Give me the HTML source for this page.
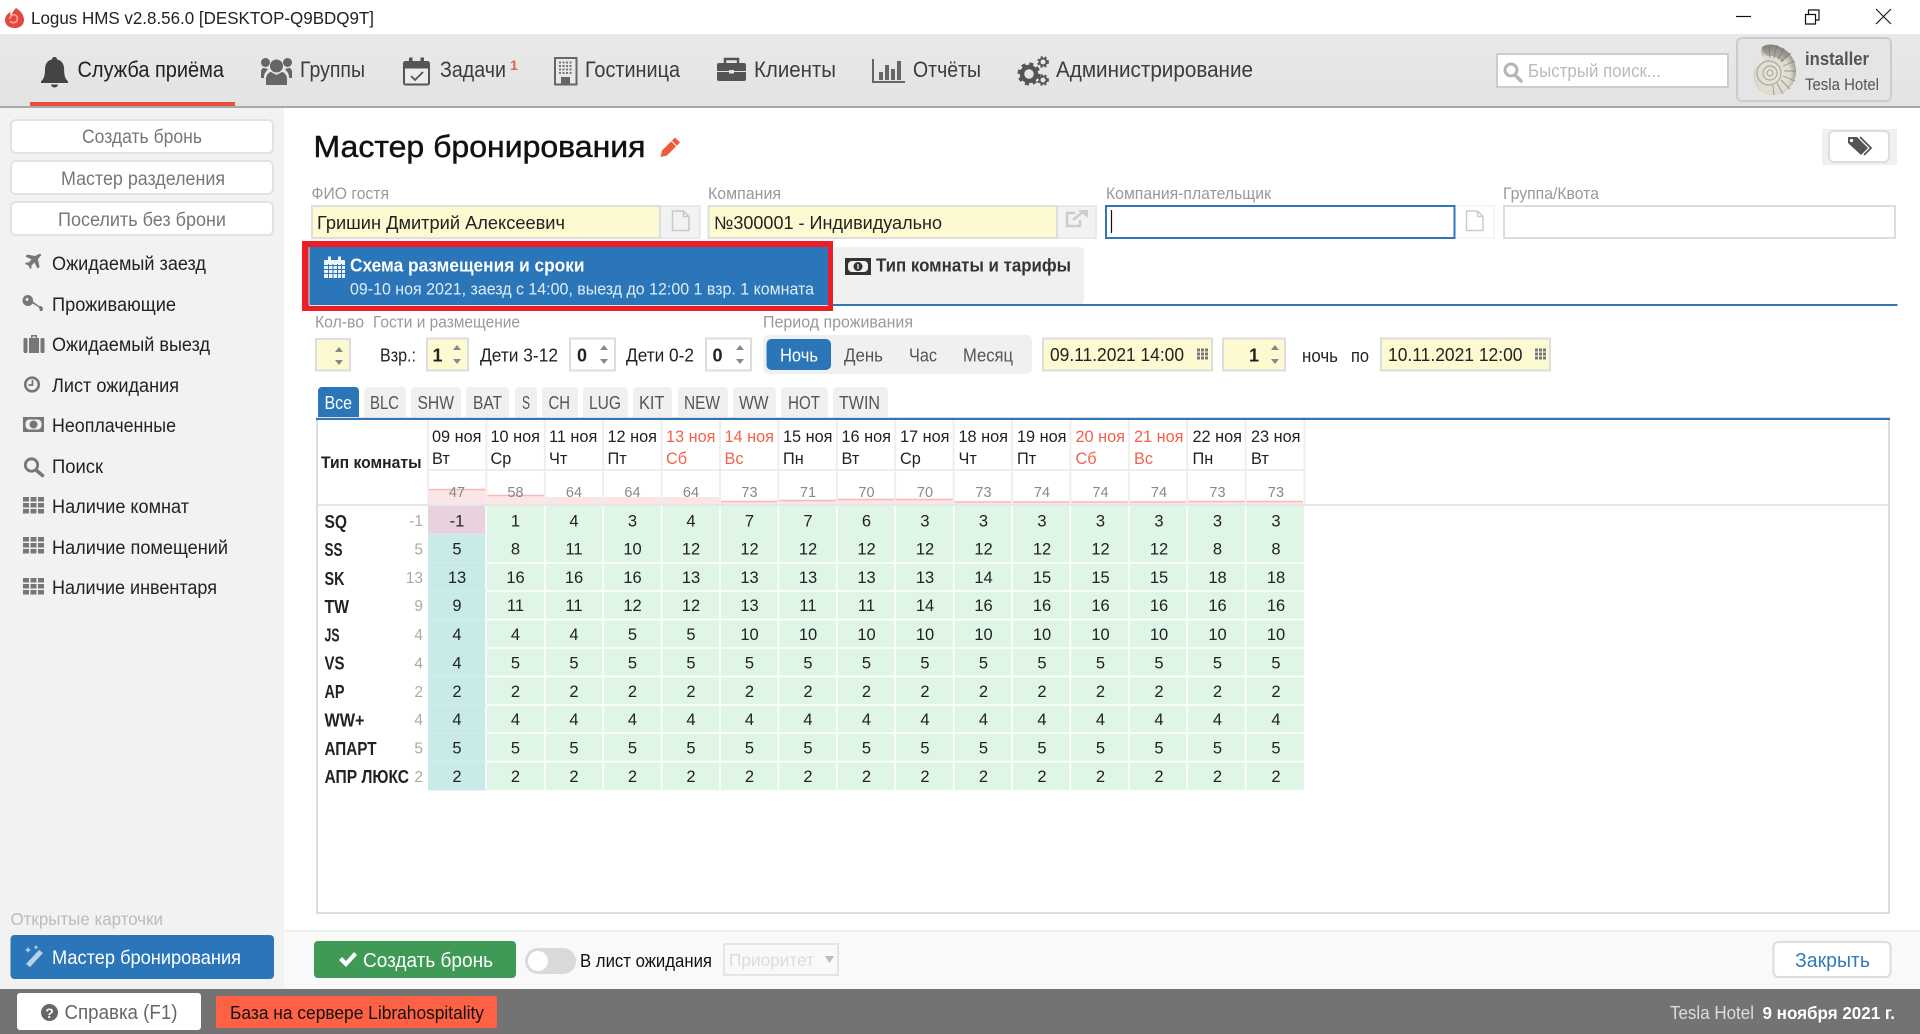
<!DOCTYPE html>
<html lang="ru">
<head>
<meta charset="utf-8">
<title>Logus HMS</title>
<style>
html,body{margin:0;padding:0;background:#fff;width:1920px;height:1034px;overflow:hidden}
svg{display:block;font-family:"Liberation Sans",sans-serif}
</style>
</head>
<body>
<svg xmlns="http://www.w3.org/2000/svg" width="1920" height="1034" viewBox="0 0 1920 1034">
<defs>
<linearGradient id="hd" x1="0" y1="0" x2="0" y2="1"><stop offset="0" stop-color="#e9e9e9"/><stop offset="1" stop-color="#e3e3e3"/></linearGradient>
<radialGradient id="sh" cx="0.45" cy="0.6" r="0.62"><stop offset="0" stop-color="#e8e6dc"/><stop offset="0.65" stop-color="#dedbcf"/><stop offset="1" stop-color="#8b8a80"/></radialGradient>
</defs>

<!-- title bar -->
<rect width="1920" height="34" fill="#fff"/>
<path d="M16 8c5 3 8 7 8 12 0 5-4 8-9 8-6 0-10-3-10-8 0-4 3-7 6-8-1 2-1 3 0 4 1-3 3-6 5-8z" fill="#e4473f"/>
<path d="M10 19c0-3 3-5 5-4 3 1 3 5 1 7-2 1-5 1-6-1" fill="none" stroke="#f7a79c" stroke-width="1.6"/>
<text x="31" y="24" font-size="17.500" fill="#222" textLength="343" lengthAdjust="spacingAndGlyphs">Logus HMS v2.8.56.0 [DESKTOP-Q9BDQ9T]</text>
<path d="M1736 16.500h15" stroke="#111" stroke-width="1.200"/>
<path d="M1805.500 14.500h10v9.500h-10zM1808.500 14.500v-4.500h10.500v10h-3.500" fill="none" stroke="#111" stroke-width="1.200"/>
<path d="M1876 9l15 15M1891 9l-15 15" stroke="#111" stroke-width="1.100"/>

<!-- header -->
<rect y="34" width="1920" height="72" fill="url(#hd)"/>
<rect y="106" width="1920" height="2" fill="#a9a9a9"/>
<rect x="30" y="102" width="205" height="4" fill="#e74c3c"/>

<path d="M54.500 57c1.600 0 2.600 1 2.600 2.500 5 1 7 5 7 10 0 6 1 9 4 12v1.500H41v-1.500c3-3 4-6 4-12 0-5 2-9 7-10 0-1.500 1-2.500 2.500-2.500z" fill="#444"/>
<path d="M51 84.500h7a3.500 3 0 0 1-7 0z" fill="#444"/>
<text x="77.500" y="77" font-size="22.500" fill="#222" textLength="146.500" lengthAdjust="spacingAndGlyphs">Служба приёма</text>

<g fill="#666"><circle cx="276.500" cy="66" r="6.500"/><path d="M266 85v-6c0-4 3-7 5-7l5.500 3 5.500-3c2 0 5 3 5 7v6z"/><circle cx="265.500" cy="62.500" r="4.500"/><circle cx="287.500" cy="62.500" r="4.500"/><path d="M261 78v-6c0-2 1-4 3-4l4 1c-1 1-2 3-3 4-1 2-1 3-1 5zM292 78v-6c0-2-1-4-3-4l-4 1c1 1 2 3 3 4 1 2 1 3 1 5z"/></g>
<text x="300" y="77" font-size="22.500" fill="#3c3c3c" textLength="65" lengthAdjust="spacingAndGlyphs">Группы</text>

<rect x="404" y="62" width="25" height="22.500" rx="1.500" fill="#ececec" stroke="#555" stroke-width="2"/>
<rect x="404" y="62" width="25" height="6.500" fill="#555"/>
<rect x="409" y="57.500" width="3.500" height="7" fill="#555"/><rect x="420.500" y="57.500" width="3.500" height="7" fill="#555"/>
<path d="M411 76l4 4 8-8" fill="none" stroke="#555" stroke-width="1.800"/>
<text x="440" y="77" font-size="22.500" fill="#3c3c3c" textLength="66" lengthAdjust="spacingAndGlyphs">Задачи</text>
<text x="510" y="70" font-size="14" font-weight="bold" fill="#e8604c" textLength="8" lengthAdjust="spacingAndGlyphs">1</text>

<rect x="555" y="58" width="21.500" height="26.500" fill="#e8e8e8" stroke="#666" stroke-width="2"/>
<path d="M559 62.500h14M559 66h14M559 69.500h14M559 73h14" stroke="#777" stroke-width="2" stroke-dasharray="2 1.500"/>
<rect x="561" y="77" width="9" height="7.500" fill="#666"/>
<text x="585" y="77" font-size="22.500" fill="#3c3c3c" textLength="95" lengthAdjust="spacingAndGlyphs">Гостиница</text>

<rect x="717" y="63" width="29" height="18" rx="2" fill="#555"/>
<path d="M725 63v-4h13v4" fill="none" stroke="#555" stroke-width="2.500"/>
<path d="M717 71.500h29" stroke="#e5e5e5" stroke-width="1"/>
<rect x="729" y="70" width="5" height="3.500" fill="#e5e5e5"/>
<text x="754" y="77" font-size="22.500" fill="#3c3c3c" textLength="82" lengthAdjust="spacingAndGlyphs">Клиенты</text>

<path d="M873 59v23h32" fill="none" stroke="#666" stroke-width="2"/>
<g fill="#666"><rect x="879" y="72" width="4" height="8"/><rect x="885" y="65" width="4" height="15"/><rect x="891" y="69" width="4" height="11"/><rect x="897" y="61" width="4" height="19"/></g>
<text x="913" y="77" font-size="22.500" fill="#3c3c3c" textLength="68" lengthAdjust="spacingAndGlyphs">Отчёты</text>

<g fill="none" stroke="#555">
<circle cx="1029" cy="74" r="7" stroke-width="4.500"/>
<circle cx="1029" cy="74" r="10" stroke-width="3" stroke-dasharray="4 3.850"/>
<circle cx="1043" cy="62" r="3.500" stroke-width="2"/>
<circle cx="1043" cy="62" r="5" stroke-width="1.800" stroke-dasharray="2 2.200"/>
<circle cx="1043" cy="80" r="3.500" stroke-width="2"/>
<circle cx="1043" cy="80" r="5" stroke-width="1.800" stroke-dasharray="2 2.200"/>
</g>
<text x="1056" y="77" font-size="22.500" fill="#3c3c3c" textLength="197" lengthAdjust="spacingAndGlyphs">Администрирование</text>

<rect x="1497" y="54" width="231" height="33" fill="#fff" stroke="#ccc" stroke-width="2"/>
<circle cx="1511" cy="70" r="6" fill="none" stroke="#b5b5b5" stroke-width="3"/>
<path d="M1515 75l6 6" stroke="#b5b5b5" stroke-width="3.500" stroke-linecap="round"/>
<text x="1528" y="77" font-size="18.500" fill="#bbb" textLength="133" lengthAdjust="spacingAndGlyphs">Быстрый поиск...</text>

<rect x="1737" y="38" width="154" height="63" rx="5" fill="#e5e5e5" stroke="#ccc" stroke-width="2"/>
<path d="M1762 47c4-3 9-3 13-2 11 3 21 12 21 26 0 12-8 22-20 24-9 1-17-3-20-10-2-4-3-9-2-13 1-5 4-8 8-9 3-1 3-3 1-5-2-3-2-8-1-11z" fill="url(#sh)"/>
<g fill="none" stroke="#77766e" stroke-width=".9" opacity=".7"><path d="M1770 58l-1-12M1774 58l3-13M1778 59l6-11M1781 62l10-9M1783 66l12-5M1784 71l12 0M1783 76l12 5M1781 80l9 9M1777 83l6 11M1773 85l1 10"/></g>
<path d="M1763 47c4-2 9-2 12-2 6 2 11 5 15 9l-8 8c-4-5-10-7-15-6-3-3-4-6-4-9z" fill="#6d6c64" opacity=".45"/>
<g fill="none" stroke="#aaa99f" stroke-width="1.200"><circle cx="1769" cy="73" r="12"/><circle cx="1770" cy="73" r="7"/><circle cx="1770" cy="73" r="3"/></g>
<text x="1805" y="65" font-size="18" font-weight="bold" fill="#555" textLength="64" lengthAdjust="spacingAndGlyphs">installer</text>
<text x="1805" y="90" font-size="17" fill="#555" textLength="74" lengthAdjust="spacingAndGlyphs">Tesla Hotel</text>

<!-- sidebar -->
<rect y="108" width="284" height="881" fill="#f2f2f2"/>
<g fill="#fff" stroke="#e2e2e2" stroke-width="2">
<rect x="11" y="120" width="262" height="33" rx="5"/>
<rect x="11" y="161" width="262" height="33" rx="5"/>
<rect x="11" y="202" width="262" height="33" rx="5"/>
</g>
<g font-size="19" fill="#777">
<text x="82" y="143" textLength="120" lengthAdjust="spacingAndGlyphs">Создать бронь</text>
<text x="61" y="185" textLength="164" lengthAdjust="spacingAndGlyphs">Мастер разделения</text>
<text x="58" y="226" textLength="168" lengthAdjust="spacingAndGlyphs">Поселить без брони</text>
</g>
<g font-size="19" fill="#222">
<text x="52" y="270" textLength="154" lengthAdjust="spacingAndGlyphs">Ожидаемый заезд</text>
<text x="52" y="311" textLength="124" lengthAdjust="spacingAndGlyphs">Проживающие</text>
<text x="52" y="351" textLength="158" lengthAdjust="spacingAndGlyphs">Ожидаемый выезд</text>
<text x="52" y="392" textLength="127" lengthAdjust="spacingAndGlyphs">Лист ожидания</text>
<text x="52" y="432" textLength="124" lengthAdjust="spacingAndGlyphs">Неоплаченные</text>
<text x="52" y="473" textLength="51" lengthAdjust="spacingAndGlyphs">Поиск</text>
<text x="52" y="513" textLength="137" lengthAdjust="spacingAndGlyphs">Наличие комнат</text>
<text x="52" y="554" textLength="176" lengthAdjust="spacingAndGlyphs">Наличие помещений</text>
<text x="52" y="594" textLength="165" lengthAdjust="spacingAndGlyphs">Наличие инвентаря</text>
</g>
<g fill="#777">
<path d="M39 254c1.500-.5 2.500 0 2 1.500l-3 3.500 1.500 8-2 1.500-3-6-3 3v2.500l-1.500 1-1.500-3.500-3.500-1.500 1-1.500h2.500l3-3-6-3 1.500-2 8 1.500z"/>
<path d="M28 295a5.500 5.500 0 1 0 0 11c2 0 3.500-1 4.500-2.500l6.500 4 1 3.500h2.500l.5-3-2-2-2 0-6-4.500a5.500 5.500 0 0 0-5-6.500zM27 298a1.500 1.500 0 1 1 0 3 1.500 1.500 0 0 1 0-3z" fill-rule="evenodd"/>
<path d="M31 338v-3h6v3h2v15h-10v-15zM32.500 338h3v-1.500h-3z" fill-rule="evenodd"/><rect x="23.500" y="338" width="4" height="15" rx="1.500"/><rect x="40.500" y="338" width="4" height="15" rx="1.500"/>
<path d="M23 417h21v15h-21z"/>
<circle cx="32" cy="384.500" r="6.800" fill="none" stroke="#777" stroke-width="2.600"/><path d="M32.500 380v5h-4" fill="none" stroke="#777" stroke-width="1.800"/>
</g>
<rect x="25.500" y="419.500" width="16" height="10" rx="4" fill="#f2f2f2"/><circle cx="33.500" cy="424.500" r="4" fill="#777"/>
<circle cx="31.500" cy="465" r="6.200" fill="none" stroke="#777" stroke-width="2.800"/><path d="M36 470l6.500 5.500" stroke="#777" stroke-width="3.500" stroke-linecap="round"/>
<g fill="#777">
<path d="M23 497h6v4.500h-6zM30.500 497h6v4.500h-6zM38 497h6v4.500h-6zM23 503h6v4.500h-6zM30.500 503h6v4.500h-6zM38 503h6v4.500h-6zM23 509h6v4.500h-6zM30.500 509h6v4.500h-6zM38 509h6v4.500h-6z"/>
<path d="M23 537h6v4.500h-6zM30.500 537h6v4.500h-6zM38 537h6v4.500h-6zM23 543h6v4.500h-6zM30.500 543h6v4.500h-6zM38 543h6v4.500h-6zM23 549h6v4.500h-6zM30.500 549h6v4.500h-6zM38 549h6v4.500h-6z"/>
<path d="M23 578h6v4.500h-6zM30.500 578h6v4.500h-6zM38 578h6v4.500h-6zM23 584h6v4.500h-6zM30.500 584h6v4.500h-6zM38 584h6v4.500h-6zM23 590h6v4.500h-6zM30.500 590h6v4.500h-6zM38 590h6v4.500h-6z"/>
</g>
<text x="10.500" y="925" font-size="17.500" fill="#bbb" textLength="152.500" lengthAdjust="spacingAndGlyphs">Открытые карточки</text>
<rect x="10.500" y="935" width="263.500" height="44" rx="4" fill="#2b76b9"/>
<path d="M26 964l13-14 4 3-13 14z" fill="#b7d3ea"/><path d="M28 947l1 2 2 1-2 1-1 2-1-2-2-1 2-1zM36 945l.8 1.500 1.500.8-1.500.8-.8 1.500-.8-1.500-1.500-.8 1.500-.8z" fill="#b7d3ea"/>
<text x="52" y="964" font-size="19.500" fill="#fff" textLength="189" lengthAdjust="spacingAndGlyphs">Мастер бронирования</text>

<!-- title -->
<text x="313.500" y="157" font-size="31" fill="#111" stroke="#111" stroke-width=".45" textLength="332" lengthAdjust="spacingAndGlyphs">Мастер бронирования</text>
<path d="M675 137.500l5 5-13 13-6.500 1.500 1.500-6.500z" fill="#ee5a3c"/><path d="M671.500 141l5 5" stroke="#fff" stroke-width="1"/>
<rect x="1822" y="129" width="75" height="36" fill="#f0f0f0"/>
<rect x="1829" y="131" width="60" height="31" rx="5" fill="#fff" stroke="#ddd" stroke-width="2"/>
<path d="M1848 137h9l11 11-7 7-13-12z" fill="#555"/><circle cx="1851.500" cy="140.500" r="1.600" fill="#fff"/><path d="M1860 137l11 11-7 7" fill="none" stroke="#555" stroke-width="1.800"/>

<!-- field labels -->
<g font-size="16.500" fill="#999">
<text x="311.500" y="199" textLength="77.500" lengthAdjust="spacingAndGlyphs">ФИО гостя</text>
<text x="708" y="199" textLength="73" lengthAdjust="spacingAndGlyphs">Компания</text>
<text x="1106" y="199" textLength="165" lengthAdjust="spacingAndGlyphs">Компания-плательщик</text>
<text x="1503" y="199" textLength="96" lengthAdjust="spacingAndGlyphs">Группа/Квота</text>
</g>

<!-- fields -->
<rect x="312" y="206" width="388" height="32" fill="#f2f2f2" stroke="#e4e4e4" stroke-width="1.500"/>
<rect x="312" y="206" width="348" height="32" fill="#fdf9d0" stroke="#dedede" stroke-width="2"/>
<rect x="708.500" y="206" width="387.500" height="32" fill="#f2f2f2" stroke="#e4e4e4" stroke-width="1.500"/>
<rect x="708.500" y="206" width="348.500" height="32" fill="#fdf9d0" stroke="#dedede" stroke-width="2"/>
<rect x="1455" y="206" width="39" height="32" fill="#fff" stroke="#eee" stroke-width="1"/>
<rect x="1106" y="206" width="348.500" height="32" fill="#fff" stroke="#2f78b8" stroke-width="2"/>
<rect x="1504" y="206" width="391" height="32" fill="#fff" stroke="#ddd" stroke-width="2"/>
<g font-size="18" fill="#222">
<text x="317" y="229" textLength="248" lengthAdjust="spacingAndGlyphs">Гришин Дмитрий Алексеевич</text>
<text x="714" y="229" textLength="228" lengthAdjust="spacingAndGlyphs">№300001 - Индивидуально</text>
</g>
<path d="M672.500 211h11l5.500 5.500v14h-16.500zM683.500 211v5.500h5.500" fill="#f2f2f2" stroke="#c8c8c8" stroke-width="1.500"/>
<path d="M1466.500 211h11l5.500 5.500v14h-16.500zM1477.500 211v5.500h5.500" fill="#fff" stroke="#ccc" stroke-width="1.500"/>
<path d="M1080 220v6h-13v-13h8" fill="none" stroke="#ccc" stroke-width="2.500"/><path d="M1073 220l11-9" stroke="#ccc" stroke-width="2.500"/><path d="M1078 210h10v8z" fill="#ccc"/>
<path d="M1111.500 210v23" stroke="#111" stroke-width="1.200"/>

<!-- tabs -->
<rect x="834" y="247" width="250" height="57" rx="4" fill="#f0f0f0"/>
<rect x="833" y="304" width="1064.500" height="2" fill="#2f78b8"/>
<rect x="302" y="241" width="531" height="70" fill="#ee1c25"/>
<rect x="309" y="247" width="519" height="58" fill="#2b76b9"/>
<path d="M309 305.500h519" stroke="#d6e4f0" stroke-width="1"/><path d="M309 247v58" stroke="#d6e4f0" stroke-width="1"/>
<rect x="324" y="260" width="21" height="18" rx="1" fill="#eef5fb"/>
<rect x="328" y="256.500" width="3" height="6" fill="#eef5fb"/><rect x="338" y="256.500" width="3" height="6" fill="#eef5fb"/>
<path d="M324 265.500h21M324 269.500h21M324 273.500h21M328.500 264v14M333 264v14M337.500 264v14M341.500 264v14" stroke="#2b76b9" stroke-width="1"/>
<text x="350" y="271.500" font-size="18" font-weight="bold" fill="#fff" textLength="234.500" lengthAdjust="spacingAndGlyphs">Схема размещения и сроки</text>
<text x="350" y="294.500" font-size="16.500" fill="#e0ecf6" textLength="464" lengthAdjust="spacingAndGlyphs">09-10 ноя 2021, заезд с 14:00, выезд до 12:00 1 взр. 1 комната</text>

<rect x="845" y="258" width="26" height="17" fill="#333"/>
<rect x="848" y="261" width="20" height="11" rx="4" fill="#f0f0f0"/><circle cx="858" cy="266.500" r="4.500" fill="#333"/><path d="M858 264v5" stroke="#f0f0f0" stroke-width="1.300"/>
<text x="876" y="271.500" font-size="18" font-weight="bold" fill="#333" textLength="195" lengthAdjust="spacingAndGlyphs">Тип комнаты и тарифы</text>

<!-- guests row -->
<g font-size="16.500" fill="#999">
<text x="315" y="327.500" textLength="49" lengthAdjust="spacingAndGlyphs">Кол-во</text>
<text x="373" y="327.500" textLength="147" lengthAdjust="spacingAndGlyphs">Гости и размещение</text>
<text x="763" y="327.500" textLength="150" lengthAdjust="spacingAndGlyphs">Период проживания</text>
</g>
<rect x="316" y="339" width="34" height="31.500" fill="#fdf9d0" stroke="#ddd" stroke-width="2"/>
<rect x="427" y="338.500" width="41" height="32" fill="#fdf9d0" stroke="#ddd" stroke-width="2"/>
<rect x="570" y="338.500" width="45" height="32" fill="#fff" stroke="#ddd" stroke-width="2"/>
<rect x="706" y="338.500" width="45" height="32" fill="#fff" stroke="#ddd" stroke-width="2"/>
<rect x="1223" y="338.500" width="62" height="32" fill="#fdf9d0" stroke="#ddd" stroke-width="2"/>
<rect x="1043" y="338.500" width="169" height="32" fill="#fdf9d0" stroke="#ddd" stroke-width="2"/>
<rect x="1381" y="338.500" width="169" height="32" fill="#fdf9d0" stroke="#ddd" stroke-width="2"/>
<path d="M335 352l4-5 4 5zM335 360l4 5 4-5zM453 350l4-5 4 5zM453 359l4 5 4-5zM600 350l4-5 4 5zM600 359l4 5 4-5zM736 350l4-5 4 5zM736 359l4 5 4-5zM1271 350l4-5 4 5zM1271 359l4 5 4-5z" fill="#888"/>
<g font-size="18.500" fill="#222">
<text x="380" y="361.500" textLength="36" lengthAdjust="spacingAndGlyphs">Взр.:</text>
<text x="480" y="361.500" textLength="78" lengthAdjust="spacingAndGlyphs">Дети 3-12</text>
<text x="626" y="361.500" textLength="68" lengthAdjust="spacingAndGlyphs">Дети 0-2</text>
<text x="1050" y="361" textLength="134" lengthAdjust="spacingAndGlyphs">09.11.2021 14:00</text>
<text x="1388" y="361" textLength="134.500" lengthAdjust="spacingAndGlyphs">10.11.2021 12:00</text>
<text x="1302" y="362" textLength="36" lengthAdjust="spacingAndGlyphs">ночь</text>
<text x="1351" y="362" textLength="18" lengthAdjust="spacingAndGlyphs">по</text>
</g>
<g font-size="18" font-weight="bold" fill="#222" text-anchor="middle">
<text x="437.500" y="361.500">1</text><text x="582" y="361.500">0</text><text x="717.500" y="361.500">0</text><text x="1254" y="361.500">1</text>
</g>
<rect x="763" y="335" width="269" height="39" rx="5" fill="#f0f0f0"/>
<rect x="766.500" y="339" width="64.500" height="31" rx="5" fill="#2b76b9"/>
<text x="780" y="361.500" font-size="18.500" fill="#fff" textLength="38" lengthAdjust="spacingAndGlyphs">Ночь</text>
<g font-size="18.500" fill="#555">
<text x="844" y="361.500" textLength="39" lengthAdjust="spacingAndGlyphs">День</text>
<text x="909" y="361.500" textLength="28" lengthAdjust="spacingAndGlyphs">Час</text>
<text x="963" y="361.500" textLength="50" lengthAdjust="spacingAndGlyphs">Месяц</text>
</g>
<path d="M1197 348.500h3v3h-3zM1201 348.500h3v3h-3zM1205 348.500h3v3h-3zM1197 352.500h3v3h-3zM1201 352.500h3v3h-3zM1205 352.500h3v3h-3zM1197 356.500h3v3h-3zM1201 356.500h3v3h-3zM1205 356.500h3v3h-3zM1535 348.500h3v3h-3zM1539 348.500h3v3h-3zM1543 348.500h3v3h-3zM1535 352.500h3v3h-3zM1539 352.500h3v3h-3zM1543 352.500h3v3h-3zM1535 356.500h3v3h-3zM1539 356.500h3v3h-3zM1543 356.500h3v3h-3z" fill="#777"/>

<!-- filter tabs -->
<g fill="#f0f0f0">
<rect x="364" y="387" width="42" height="34" rx="4"/><rect x="411" y="387" width="50" height="34" rx="4"/><rect x="466" y="387" width="43" height="34" rx="4"/><rect x="515" y="387" width="22" height="34" rx="4"/><rect x="542" y="387" width="36" height="34" rx="4"/><rect x="583" y="387" width="45" height="34" rx="4"/><rect x="633" y="387" width="39" height="34" rx="4"/><rect x="678" y="387" width="50" height="34" rx="4"/><rect x="733" y="387" width="43" height="34" rx="4"/><rect x="781" y="387" width="47" height="34" rx="4"/><rect x="833" y="387" width="55" height="34" rx="4"/>
</g>
<rect x="318" y="387" width="41" height="34" rx="4" fill="#2b76b9"/>
<!-- table background -->
<rect x="317" y="418" width="1572" height="495" fill="#fff" stroke="#ddd" stroke-width="2"/>
<rect x="316" y="418" width="1574" height="2" fill="#2f78b8"/>
<g font-size="18.500" fill="#555">
<text x="324.500" y="409" fill="#fff" textLength="27.500" lengthAdjust="spacingAndGlyphs">Все</text>
<text x="370" y="409" textLength="29" lengthAdjust="spacingAndGlyphs">BLC</text>
<text x="417.500" y="409" textLength="36.500" lengthAdjust="spacingAndGlyphs">SHW</text>
<text x="473" y="409" textLength="29" lengthAdjust="spacingAndGlyphs">BAT</text>
<text x="522" y="409" textLength="8" lengthAdjust="spacingAndGlyphs">S</text>
<text x="548.500" y="409" textLength="21.500" lengthAdjust="spacingAndGlyphs">CH</text>
<text x="589" y="409" textLength="32" lengthAdjust="spacingAndGlyphs">LUG</text>
<text x="639" y="409" textLength="25.500" lengthAdjust="spacingAndGlyphs">KIT</text>
<text x="684" y="409" textLength="36" lengthAdjust="spacingAndGlyphs">NEW</text>
<text x="739" y="409" textLength="29.500" lengthAdjust="spacingAndGlyphs">WW</text>
<text x="788" y="409" textLength="32" lengthAdjust="spacingAndGlyphs">HOT</text>
<text x="839" y="409" textLength="41" lengthAdjust="spacingAndGlyphs">TWIN</text>
</g>

<!-- table grid header -->
<path d="M428 420v84M486.400 420v84M544.800 420v84M603.200 420v84M661.600 420v84M720 420v84M778.400 420v84M836.800 420v84M895.200 420v84M953.600 420v84M1012 420v84M1070.400 420v84M1128.800 420v84M1187.200 420v84M1245.600 420v84M1304.500 420v84" stroke="#eee" stroke-width="2"/>
<path d="M428 470h877" stroke="#eee" stroke-width="2"/>
<!-- load bars -->
<g fill="#fce5e5">
<rect x="429" y="489" width="56.400" height="15"/><rect x="487.400" y="495" width="56.400" height="9"/><rect x="545.800" y="497" width="56.400" height="7"/><rect x="604.200" y="497" width="56.400" height="7"/><rect x="662.600" y="497" width="56.400" height="7"/><rect x="721" y="501" width="56.400" height="3"/><rect x="779.400" y="500" width="56.400" height="4"/><rect x="837.800" y="499" width="56.400" height="5"/><rect x="896.200" y="499" width="56.400" height="5"/><rect x="954.600" y="501.500" width="56.400" height="2.500"/><rect x="1013" y="501.500" width="56.400" height="2.500"/><rect x="1071.400" y="501.500" width="56.400" height="2.500"/><rect x="1129.800" y="501.500" width="56.400" height="2.500"/><rect x="1188.200" y="501" width="56.400" height="3"/><rect x="1246.600" y="501" width="56.400" height="3"/>
</g>
<path d="M429 489.500h56.400M487.400 495.500h56.400M721 501.500h56.400M779.400 500.500h56.400M837.800 499.500h56.400M896.200 499.500h56.400M954.600 502h56.400M1013 502h56.400M1071.400 502h56.400M1129.800 502h56.400M1188.200 501.500h56.400M1246.600 501.500h56.400" stroke="#f6b9b9" stroke-width="1.500"/>
<rect x="318" y="504" width="1570" height="2" fill="#e6e6e6"/>
<text x="321" y="468" font-size="16.500" font-weight="bold" fill="#222" textLength="100.500" lengthAdjust="spacingAndGlyphs">Тип комнаты</text>

<g font-size="16.300" fill="#222">
<text x="432" y="442">09 ноя</text><text x="490.500" y="442">10 ноя</text><text x="549" y="442">11 ноя</text><text x="607.500" y="442">12 ноя</text>
<text x="666" y="442" fill="#f6604a">13 ноя</text><text x="724.500" y="442" fill="#f6604a">14 ноя</text>
<text x="783" y="442">15 ноя</text><text x="841.500" y="442">16 ноя</text><text x="900" y="442">17 ноя</text><text x="958.500" y="442">18 ноя</text><text x="1017" y="442">19 ноя</text>
<text x="1075.500" y="442" fill="#f6604a">20 ноя</text><text x="1134" y="442" fill="#f6604a">21 ноя</text>
<text x="1192.500" y="442">22 ноя</text><text x="1251" y="442">23 ноя</text>
<text x="432" y="464">Вт</text><text x="490.500" y="464">Ср</text><text x="549" y="464">Чт</text><text x="607.500" y="464">Пт</text>
<text x="666" y="464" fill="#f6604a">Сб</text><text x="724.500" y="464" fill="#f6604a">Вс</text>
<text x="783" y="464">Пн</text><text x="841.500" y="464">Вт</text><text x="900" y="464">Ср</text><text x="958.500" y="464">Чт</text><text x="1017" y="464">Пт</text>
<text x="1075.500" y="464" fill="#f6604a">Сб</text><text x="1134" y="464" fill="#f6604a">Вс</text>
<text x="1192.500" y="464">Пн</text><text x="1251" y="464">Вт</text>
</g>
<text y="497" font-size="14.500" fill="#888" text-anchor="middle"><tspan x="457">47</tspan><tspan x="515.500">58</tspan><tspan x="574">64</tspan><tspan x="632.500">64</tspan><tspan x="691">64</tspan><tspan x="749.500">73</tspan><tspan x="808">71</tspan><tspan x="866.500">70</tspan><tspan x="925">70</tspan><tspan x="983.500">73</tspan><tspan x="1042">74</tspan><tspan x="1100.500">74</tspan><tspan x="1159">74</tspan><tspan x="1217.500">73</tspan><tspan x="1276">73</tspan></text>

<!-- cells -->
<rect x="486" y="506" width="818" height="284" fill="#dff5e5"/>
<rect x="428" y="506" width="58" height="28.400" fill="#e8d2e0"/>
<rect x="428" y="534.400" width="58" height="255.600" fill="#c8ebe8"/>
<path d="M486 506v284M544.800 506v284M603.200 506v284M661.600 506v284M720 506v284M778.400 506v284M836.800 506v284M895.200 506v284M953.600 506v284M1012 506v284M1070.400 506v284M1128.800 506v284M1187.200 506v284M1245.600 506v284" stroke="#fff" stroke-width="1.600"/>
<path d="M487 562.800h817M487 591.200h817M487 619.600h817M487 648h817M487 676.400h817M487 704.800h817M487 733.200h817M487 761.600h817" stroke="#fff" stroke-width="1.600"/>
<path d="M428 534.400h58M428 562.800h58M428 591.200h58M428 619.600h58M428 648h58M428 676.400h58M428 704.800h58M428 733.200h58M428 761.600h58M428 790h58" stroke="#d5ebf5" stroke-width="1.200"/>

<g font-size="16.500" fill="#222" text-anchor="middle">
<text y="526.500"><tspan x="457">-1</tspan><tspan x="515.500">1</tspan><tspan x="574">4</tspan><tspan x="632.500">3</tspan><tspan x="691">4</tspan><tspan x="749.500">7</tspan><tspan x="808">7</tspan><tspan x="866.500">6</tspan><tspan x="925">3</tspan><tspan x="983.500">3</tspan><tspan x="1042">3</tspan><tspan x="1100.500">3</tspan><tspan x="1159">3</tspan><tspan x="1217.500">3</tspan><tspan x="1276">3</tspan></text>
<text y="554.500"><tspan x="457">5</tspan><tspan x="515.500">8</tspan><tspan x="574">11</tspan><tspan x="632.500">10</tspan><tspan x="691">12</tspan><tspan x="749.500">12</tspan><tspan x="808">12</tspan><tspan x="866.500">12</tspan><tspan x="925">12</tspan><tspan x="983.500">12</tspan><tspan x="1042">12</tspan><tspan x="1100.500">12</tspan><tspan x="1159">12</tspan><tspan x="1217.500">8</tspan><tspan x="1276">8</tspan></text>
<text y="583"><tspan x="457">13</tspan><tspan x="515.500">16</tspan><tspan x="574">16</tspan><tspan x="632.500">16</tspan><tspan x="691">13</tspan><tspan x="749.500">13</tspan><tspan x="808">13</tspan><tspan x="866.500">13</tspan><tspan x="925">13</tspan><tspan x="983.500">14</tspan><tspan x="1042">15</tspan><tspan x="1100.500">15</tspan><tspan x="1159">15</tspan><tspan x="1217.500">18</tspan><tspan x="1276">18</tspan></text>
<text y="611.200"><tspan x="457">9</tspan><tspan x="515.500">11</tspan><tspan x="574">11</tspan><tspan x="632.500">12</tspan><tspan x="691">12</tspan><tspan x="749.500">13</tspan><tspan x="808">11</tspan><tspan x="866.500">11</tspan><tspan x="925">14</tspan><tspan x="983.500">16</tspan><tspan x="1042">16</tspan><tspan x="1100.500">16</tspan><tspan x="1159">16</tspan><tspan x="1217.500">16</tspan><tspan x="1276">16</tspan></text>
<text y="640"><tspan x="457">4</tspan><tspan x="515.500">4</tspan><tspan x="574">4</tspan><tspan x="632.500">5</tspan><tspan x="691">5</tspan><tspan x="749.500">10</tspan><tspan x="808">10</tspan><tspan x="866.500">10</tspan><tspan x="925">10</tspan><tspan x="983.500">10</tspan><tspan x="1042">10</tspan><tspan x="1100.500">10</tspan><tspan x="1159">10</tspan><tspan x="1217.500">10</tspan><tspan x="1276">10</tspan></text>
<text y="668.400"><tspan x="457">4</tspan><tspan x="515.500">5</tspan><tspan x="574">5</tspan><tspan x="632.500">5</tspan><tspan x="691">5</tspan><tspan x="749.500">5</tspan><tspan x="808">5</tspan><tspan x="866.500">5</tspan><tspan x="925">5</tspan><tspan x="983.500">5</tspan><tspan x="1042">5</tspan><tspan x="1100.500">5</tspan><tspan x="1159">5</tspan><tspan x="1217.500">5</tspan><tspan x="1276">5</tspan></text>
<text y="697"><tspan x="457">2</tspan><tspan x="515.500">2</tspan><tspan x="574">2</tspan><tspan x="632.500">2</tspan><tspan x="691">2</tspan><tspan x="749.500">2</tspan><tspan x="808">2</tspan><tspan x="866.500">2</tspan><tspan x="925">2</tspan><tspan x="983.500">2</tspan><tspan x="1042">2</tspan><tspan x="1100.500">2</tspan><tspan x="1159">2</tspan><tspan x="1217.500">2</tspan><tspan x="1276">2</tspan></text>
<text y="725.200"><tspan x="457">4</tspan><tspan x="515.500">4</tspan><tspan x="574">4</tspan><tspan x="632.500">4</tspan><tspan x="691">4</tspan><tspan x="749.500">4</tspan><tspan x="808">4</tspan><tspan x="866.500">4</tspan><tspan x="925">4</tspan><tspan x="983.500">4</tspan><tspan x="1042">4</tspan><tspan x="1100.500">4</tspan><tspan x="1159">4</tspan><tspan x="1217.500">4</tspan><tspan x="1276">4</tspan></text>
<text y="753.600"><tspan x="457">5</tspan><tspan x="515.500">5</tspan><tspan x="574">5</tspan><tspan x="632.500">5</tspan><tspan x="691">5</tspan><tspan x="749.500">5</tspan><tspan x="808">5</tspan><tspan x="866.500">5</tspan><tspan x="925">5</tspan><tspan x="983.500">5</tspan><tspan x="1042">5</tspan><tspan x="1100.500">5</tspan><tspan x="1159">5</tspan><tspan x="1217.500">5</tspan><tspan x="1276">5</tspan></text>
<text y="782"><tspan x="457">2</tspan><tspan x="515.500">2</tspan><tspan x="574">2</tspan><tspan x="632.500">2</tspan><tspan x="691">2</tspan><tspan x="749.500">2</tspan><tspan x="808">2</tspan><tspan x="866.500">2</tspan><tspan x="925">2</tspan><tspan x="983.500">2</tspan><tspan x="1042">2</tspan><tspan x="1100.500">2</tspan><tspan x="1159">2</tspan><tspan x="1217.500">2</tspan><tspan x="1276">2</tspan></text>
</g>

<g font-size="18" font-weight="bold" fill="#222">
<text x="324.500" y="528" textLength="22.500" lengthAdjust="spacingAndGlyphs">SQ</text>
<text x="324.500" y="556" textLength="18" lengthAdjust="spacingAndGlyphs">SS</text>
<text x="324.500" y="585" textLength="20" lengthAdjust="spacingAndGlyphs">SK</text>
<text x="324.500" y="613" textLength="24.500" lengthAdjust="spacingAndGlyphs">TW</text>
<text x="324.500" y="641.500" textLength="15" lengthAdjust="spacingAndGlyphs">JS</text>
<text x="324.500" y="669.500" textLength="20" lengthAdjust="spacingAndGlyphs">VS</text>
<text x="324.500" y="698" textLength="20" lengthAdjust="spacingAndGlyphs">AP</text>
<text x="324.500" y="726.500" textLength="40" lengthAdjust="spacingAndGlyphs">WW+</text>
<text x="324.500" y="755" textLength="52" lengthAdjust="spacingAndGlyphs">АПАРТ</text>
<text x="324.500" y="783" textLength="84.500" lengthAdjust="spacingAndGlyphs">АПР ЛЮКС</text>
</g>
<g font-size="15.500" fill="#aaa" text-anchor="end">
<text x="423" y="526">-1</text><text x="423" y="554.400">5</text><text x="423" y="583">13</text><text x="423" y="611.200">9</text><text x="423" y="640">4</text><text x="423" y="668.400">4</text><text x="423" y="697">2</text><text x="423" y="725.200">4</text><text x="423" y="753.600">5</text><text x="423" y="782">2</text>
</g>

<!-- bottom action bar -->
<rect x="284" y="931" width="1636" height="58" fill="#f9f9f9"/>
<rect x="284" y="930" width="1636" height="1.500" fill="#eee"/>
<rect x="314" y="941" width="202" height="37" rx="4" fill="#3f9a55"/>
<path d="M339 960l3-3 4 4 8-9 3 3-11 12z" fill="#fff"/>
<text x="363" y="967" font-size="20.500" fill="#fff" textLength="130" lengthAdjust="spacingAndGlyphs">Создать бронь</text>
<rect x="525" y="948" width="51" height="26" rx="13" fill="#d9d9d9"/>
<circle cx="538" cy="961" r="10" fill="#fff"/>
<text x="580" y="967" font-size="18" fill="#111" textLength="132" lengthAdjust="spacingAndGlyphs">В лист ожидания</text>
<rect x="724" y="944" width="114" height="31" fill="#f9f9f9" stroke="#e5e5e5" stroke-width="2"/>
<text x="729" y="966" font-size="17.500" fill="#dcdcdc" textLength="85" lengthAdjust="spacingAndGlyphs">Приоритет</text>
<path d="M825 956h9l-4.500 7z" fill="#bbb"/>
<rect x="1773.500" y="942" width="117" height="35" rx="5" fill="#fff" stroke="#ddd" stroke-width="2"/>
<text x="1795" y="967" font-size="20" fill="#337ab7" textLength="75" lengthAdjust="spacingAndGlyphs">Закрыть</text>

<!-- footer -->
<rect y="989" width="1920" height="45" fill="#737373"/>
<rect x="17" y="993" width="184" height="37" rx="3" fill="#fff"/>
<circle cx="49.500" cy="1012.500" r="8.500" fill="#666"/>
<text x="49.500" y="1018" font-size="14" font-weight="bold" fill="#fff" text-anchor="middle">?</text>
<text x="64.500" y="1019" font-size="20.500" fill="#666" textLength="113" lengthAdjust="spacingAndGlyphs">Справка (F1)</text>
<rect x="216" y="996" width="281" height="32" rx="2" fill="#fe6144"/>
<text x="230" y="1019" font-size="18" fill="#111" textLength="254" lengthAdjust="spacingAndGlyphs">База на сервере Librahospitality</text>
<text x="1670" y="1019" font-size="18" fill="#ddd" textLength="84" lengthAdjust="spacingAndGlyphs">Tesla Hotel</text>
<text x="1762.500" y="1019" font-size="17.500" font-weight="bold" fill="#fff" textLength="132.500" lengthAdjust="spacingAndGlyphs">9 ноября 2021 г.</text>
</svg>
</body>
</html>
